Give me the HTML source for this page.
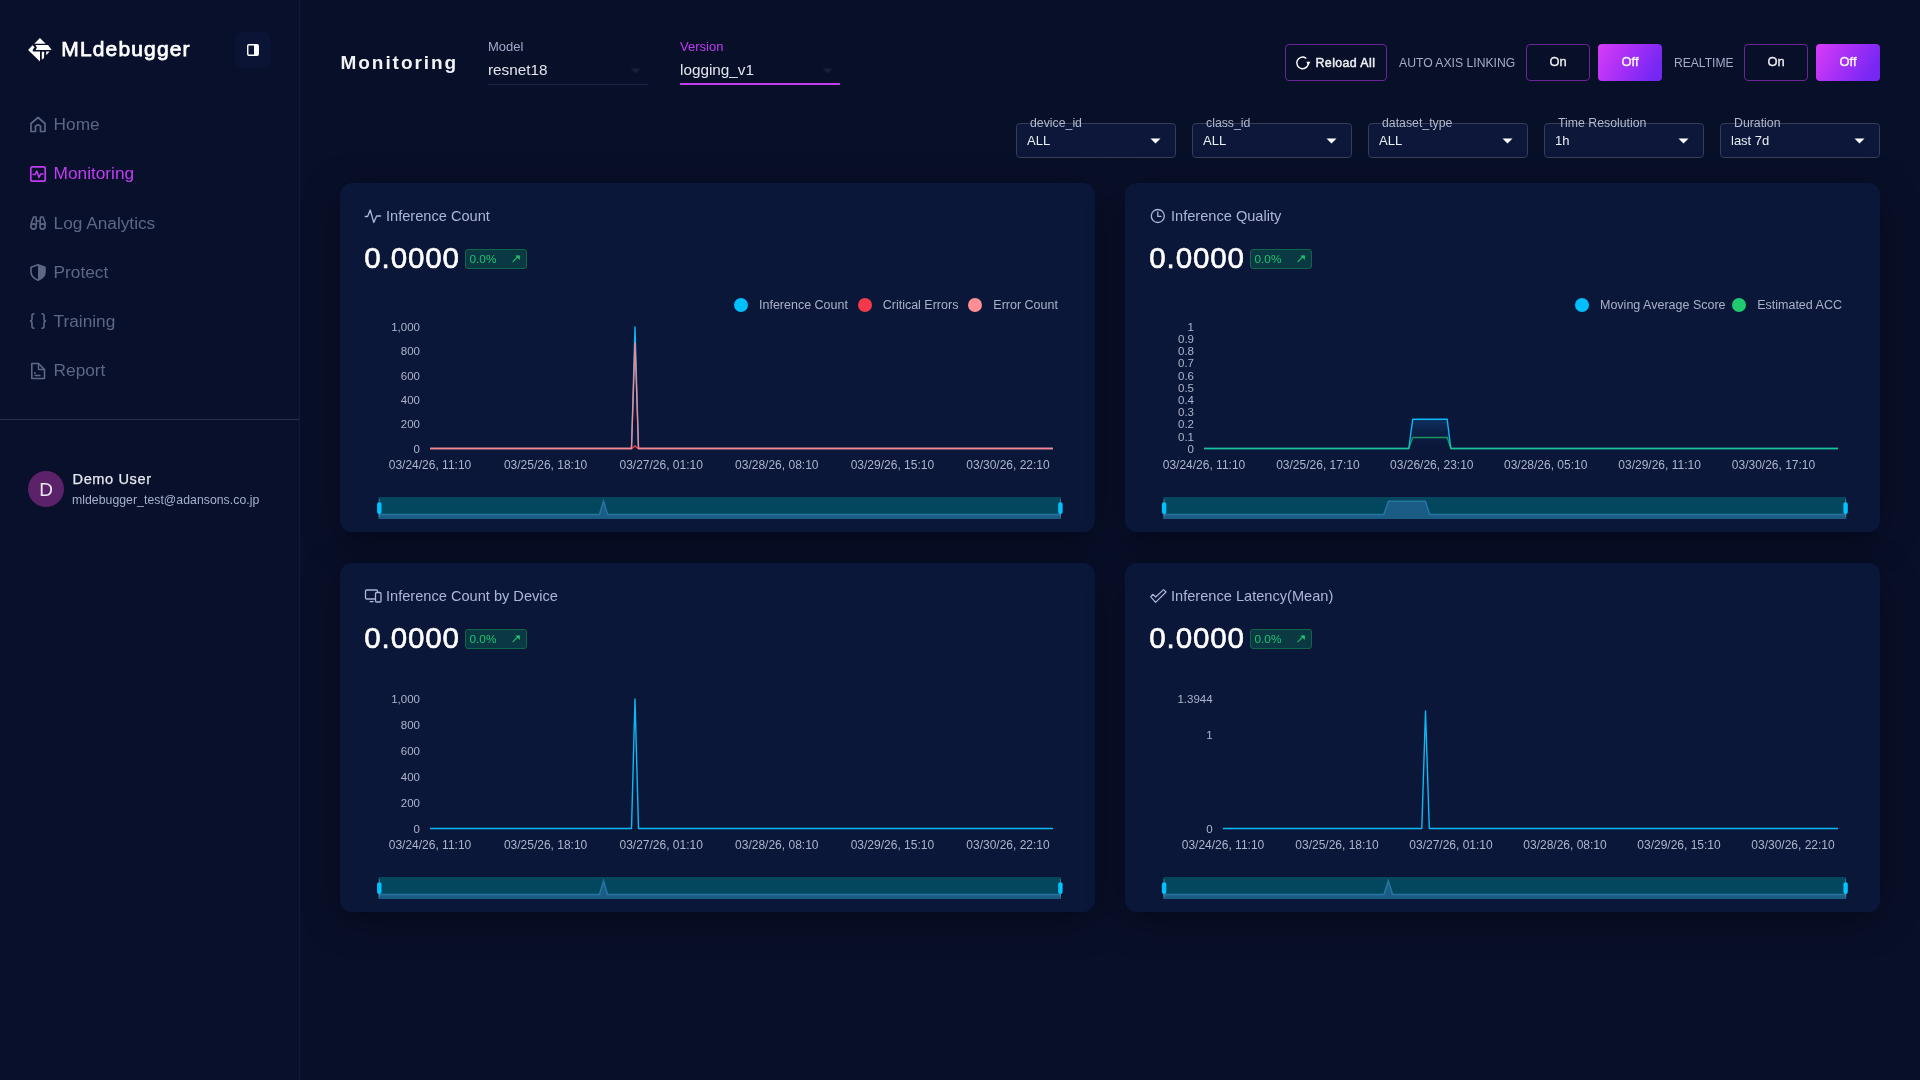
<!DOCTYPE html><html><head><meta charset="utf-8"><style>
html,body{margin:0;padding:0;}
body{width:1920px;height:1080px;overflow:hidden;background:#080f28;font-family:"Liberation Sans", sans-serif;position:relative;}
.t{position:absolute;white-space:nowrap;line-height:1;}
#w{position:absolute;left:0;top:0;width:1920px;height:1080px;will-change:transform;}
.b{position:absolute;box-sizing:border-box;}
svg{position:absolute;overflow:visible;}
</style></head><body><div id="w">
<div class="b" style="left:0px;top:0px;width:300px;height:1080px;background:#09102b;border-right:1px solid #0e1a40;"></div>
<svg style="left:0;top:0" width="300" height="80" viewBox="0 0 300 80">
<g fill="#ffffff">
<path d="M39.9 37.9 L45.7 43.8 L34.3 43.8 Z"/>
<path d="M35.4 45.1 L48.0 45.1 L51.7 50.1 L35.7 50.1 L36.9 47.4 Z"/>
<path d="M28.1 50.0 L32.45 45.35 L33.4 46.0 L34.6 47.3 L33.25 49.0 L32.6 50.5 L33.0 51.45 L40.0 51.45 L40.0 61.4 Z"/>
<path d="M41.8 51.8 L44.2 51.8 L44.0 57.8 Q43.6 59.2 41.8 59.4 Z"/>
<path d="M46.2 51.55 L49.6 51.55 L46.2 55.2 Z"/>
</g></svg>
<div class="t" style="left:61.30px;top:38.42px;font-size:21px;color:#ffffff;letter-spacing:1.15px;-webkit-text-stroke:0.75px #fff;">MLdebugger</div>
<div class="b" style="left:235px;top:32px;width:36px;height:36px;background:#0b1434;border-radius:8px;"></div>
<svg style="left:247px;top:44px" width="12" height="12" viewBox="0 0 12 12">
<rect x="0.75" y="0.75" width="10.5" height="10.5" rx="1.2" fill="none" stroke="#fff" stroke-width="1.4"/>
<rect x="7" y="0.75" width="4.25" height="10.5" fill="#fff"/>
</svg>
<div class="t" style="left:53.60px;top:116.00px;font-size:17.25px;color:#5d6786;">Home</div>
<div class="t" style="left:53.60px;top:165.00px;font-size:17.25px;color:#c23cf2;">Monitoring</div>
<div class="t" style="left:53.60px;top:214.60px;font-size:17.25px;color:#5d6786;">Log Analytics</div>
<div class="t" style="left:53.60px;top:264.10px;font-size:17.25px;color:#5d6786;">Protect</div>
<div class="t" style="left:53.60px;top:313.20px;font-size:17.25px;color:#5d6786;">Training</div>
<div class="t" style="left:53.60px;top:362.20px;font-size:17.25px;color:#5d6786;">Report</div>
<svg style="left:0;top:0" width="300" height="400" viewBox="0 0 300 400" fill="none" stroke-linecap="round" stroke-linejoin="round">
<path d="M31 131.5 V123.5 L38 117.5 L45 123.5 V131.5 H40.5 V126 Q38 123.5 35.5 126 V131.5 Z" stroke="#5d6786" stroke-width="1.7"/>
<rect x="30.8" y="166.8" width="14.4" height="14.4" rx="1.8" stroke="#c23cf2" stroke-width="1.7"/>
<path d="M33 174.5 H35.3 L36.8 171 L39 177.5 L40.6 174 H43" stroke="#c23cf2" stroke-width="1.5"/>
<path d="M31 224 L33.5 217 H36 L36.5 224 M40 224 L40.5 217 H43 L45.5 224" stroke="#5d6786" stroke-width="1.6"/>
<circle cx="33.5" cy="226.5" r="2.6" stroke="#5d6786" stroke-width="1.6"/>
<circle cx="42.5" cy="226.5" r="2.6" stroke="#5d6786" stroke-width="1.6"/>
<path d="M36.5 221 H40" stroke="#5d6786" stroke-width="1.6"/>
<path d="M38 264.8 L45 267.2 V272 Q45 277.5 38 280.2 Q31 277.5 31 272 V267.2 Z" stroke="#5d6786" stroke-width="1.6"/>
<path d="M38 264.8 L45 267.2 V272 Q45 277.5 38 280.2 Z" fill="#5d6786"/>
<path d="M34 313.8 Q32 313.8 32 315.5 V318.5 Q32 320.8 30.5 321 Q32 321.2 32 323.5 V326.5 Q32 328.2 34 328.2" stroke="#5d6786" stroke-width="1.6"/>
<path d="M42 313.8 Q44 313.8 44 315.5 V318.5 Q44 320.8 45.5 321 Q44 321.2 44 323.5 V326.5 Q44 328.2 42 328.2" stroke="#5d6786" stroke-width="1.6"/>
<path d="M31.8 363.5 H38.5 L44.5 369.5 V378.5 H31.8 Z" stroke="#5d6786" stroke-width="1.6"/>
<path d="M38.5 363.5 V369.5 H44.5" stroke="#5d6786" stroke-width="1.4"/>
<path d="M34.5 373 H35.5 M35 375.5 H40" stroke="#5d6786" stroke-width="1.4"/>
</svg>
<div class="b" style="left:0px;top:419px;width:299px;height:1px;background:#293247;"></div>
<div class="b" style="left:28px;top:471px;width:36px;height:36px;border-radius:50%;background:#5b2169;"></div>
<div class="t" style="left:46.00px;top:480.42px;font-size:19px;color:#e8e8f0;transform:translateX(-50%);">D</div>
<div class="t" style="left:72.50px;top:471.64px;font-size:14.6px;color:#e6e8ef;letter-spacing:0.6px;-webkit-text-stroke:0.25px #e6e8ef;">Demo User</div>
<div class="t" style="left:72.00px;top:493.63px;font-size:12.25px;color:#a7b0cc;letter-spacing:0.04px;">mldebugger_test@adansons.co.jp</div>
<div class="t" style="left:340.50px;top:53.12px;font-size:19px;color:#f2f3f7;font-weight:700;letter-spacing:1.95px;">Monitoring</div>
<div class="t" style="left:488.00px;top:39.70px;font-size:13px;color:#a2a9cc;">Model</div>
<div class="t" style="left:488.00px;top:61.85px;font-size:15.3px;color:#e4e6ee;">resnet18</div>
<div class="b" style="left:488px;top:84px;width:160px;height:1px;background:#1b2440;"></div>
<svg style="left:630px;top:68px" width="12" height="6"><path d="M0.5 0.5 L10.5 0.5 L5.5 5.5 Z" fill="#1a2035"/></svg>
<div class="t" style="left:680.00px;top:39.70px;font-size:13px;color:#c23cf2;">Version</div>
<div class="t" style="left:680.00px;top:61.85px;font-size:15.3px;color:#e4e6ee;">logging_v1</div>
<div class="b" style="left:680px;top:83px;width:160px;height:2px;background:#c23cf2;"></div>
<svg style="left:822px;top:68px" width="12" height="6"><path d="M0.5 0.5 L10.5 0.5 L5.5 5.5 Z" fill="#1a2035"/></svg>
<div class="b" style="left:1285px;top:44px;width:102px;height:37px;border:1px solid #6a2596;border-radius:4px;"></div>
<svg style="left:1294px;top:55px" width="18" height="16" viewBox="0 0 18 16" fill="none">
<path d="M14.35 7.4 A5.8 5.8 0 1 1 11.8 3.1" stroke="#fff" stroke-width="1.45" stroke-linecap="round"/>
<path d="M12.3 6.7 L16.4 6.7 L14.35 10.4 Z" fill="#fff"/>
</svg>
<div class="t" style="left:1315.50px;top:57.10px;font-size:12.4px;color:#f0f1f5;letter-spacing:0.4px;-webkit-text-stroke:0.45px #f0f1f5;">Reload All</div>
<div class="t" style="left:1399.00px;top:57.07px;font-size:12.2px;color:#a5acc6;">AUTO AXIS LINKING</div>
<div class="b" style="left:1526px;top:44px;width:64px;height:37px;border:1px solid #6a2596;border-radius:4px;"></div>
<div class="t" style="left:1558.00px;top:56.48px;font-size:12.9px;color:#f0f1f5;transform:translateX(-50%);-webkit-text-stroke:0.3px #f0f1f5;">On</div>
<div class="b" style="left:1744px;top:44px;width:64px;height:37px;border:1px solid #6a2596;border-radius:4px;"></div>
<div class="t" style="left:1776.00px;top:56.48px;font-size:12.9px;color:#f0f1f5;transform:translateX(-50%);-webkit-text-stroke:0.3px #f0f1f5;">On</div>
<div class="b" style="left:1598px;top:44px;width:64px;height:37px;border-radius:4px;background:linear-gradient(120deg,#d83df8 0%,#a52ff6 45%,#7727f4 85%);"></div>
<div class="t" style="left:1630.00px;top:56.48px;font-size:12.9px;color:#ffffff;transform:translateX(-50%);-webkit-text-stroke:0.3px #fff;">Off</div>
<div class="b" style="left:1816px;top:44px;width:64px;height:37px;border-radius:4px;background:linear-gradient(120deg,#d83df8 0%,#a52ff6 45%,#7727f4 85%);"></div>
<div class="t" style="left:1848.00px;top:56.48px;font-size:12.9px;color:#ffffff;transform:translateX(-50%);-webkit-text-stroke:0.3px #fff;">Off</div>
<div class="t" style="left:1674.00px;top:57.16px;font-size:12.1px;color:#a5acc6;">REALTIME</div>
<div class="b" style="left:1016px;top:123px;width:160px;height:35px;background:#0c1739;border:1px solid #363e55;border-radius:4px;"></div>
<div class="t" style="left:1030.00px;top:117.09px;font-size:12.3px;color:#b3b9cf;">device_id</div>
<div class="t" style="left:1027.00px;top:134.20px;font-size:13px;color:#eceef4;">ALL</div>
<svg style="left:1150px;top:138px" width="12" height="7"><path d="M0.5 0.5 L10.5 0.5 L5.5 5.5 Z" fill="#ffffff"/></svg>
<div class="b" style="left:1192px;top:123px;width:160px;height:35px;background:#0c1739;border:1px solid #363e55;border-radius:4px;"></div>
<div class="t" style="left:1206.00px;top:117.09px;font-size:12.3px;color:#b3b9cf;">class_id</div>
<div class="t" style="left:1203.00px;top:134.20px;font-size:13px;color:#eceef4;">ALL</div>
<svg style="left:1326px;top:138px" width="12" height="7"><path d="M0.5 0.5 L10.5 0.5 L5.5 5.5 Z" fill="#ffffff"/></svg>
<div class="b" style="left:1368px;top:123px;width:160px;height:35px;background:#0c1739;border:1px solid #363e55;border-radius:4px;"></div>
<div class="t" style="left:1382.00px;top:117.09px;font-size:12.3px;color:#b3b9cf;">dataset_type</div>
<div class="t" style="left:1379.00px;top:134.20px;font-size:13px;color:#eceef4;">ALL</div>
<svg style="left:1502px;top:138px" width="12" height="7"><path d="M0.5 0.5 L10.5 0.5 L5.5 5.5 Z" fill="#ffffff"/></svg>
<div class="b" style="left:1544px;top:123px;width:160px;height:35px;background:#0c1739;border:1px solid #363e55;border-radius:4px;"></div>
<div class="t" style="left:1558.00px;top:117.09px;font-size:12.3px;color:#b3b9cf;">Time Resolution</div>
<div class="t" style="left:1555.00px;top:134.20px;font-size:13px;color:#eceef4;">1h</div>
<svg style="left:1678px;top:138px" width="12" height="7"><path d="M0.5 0.5 L10.5 0.5 L5.5 5.5 Z" fill="#ffffff"/></svg>
<div class="b" style="left:1720px;top:123px;width:160px;height:35px;background:#0c1739;border:1px solid #363e55;border-radius:4px;"></div>
<div class="t" style="left:1734.00px;top:117.09px;font-size:12.3px;color:#b3b9cf;">Duration</div>
<div class="t" style="left:1731.00px;top:134.20px;font-size:13px;color:#eceef4;">last 7d</div>
<svg style="left:1854px;top:138px" width="12" height="7"><path d="M0.5 0.5 L10.5 0.5 L5.5 5.5 Z" fill="#ffffff"/></svg>
<div class="b" style="left:340px;top:183px;width:755px;height:349px;background:#0b1739;border-radius:12px;box-shadow:0 8px 36px rgba(0,0,0,0.34);"></div>
<div class="t" style="left:386.00px;top:208.84px;font-size:14.6px;color:#adb5d9;">Inference Count</div>
<div class="t" style="left:364.30px;top:242.84px;font-size:29.6px;color:#ffffff;letter-spacing:0.85px;-webkit-text-stroke:0.6px #fff;">0.0000</div>
<div class="b" style="left:465px;top:249px;width:62px;height:20px;background:#0a3944;border:1px solid #0f6648;border-radius:3px;"></div>
<div class="t" style="left:469.50px;top:253.71px;font-size:11.8px;color:#1fc270;">0.0%</div>
<svg style="left:511px;top:254px" width="10" height="10" viewBox="0 0 10 10" fill="none" stroke="#1fc270" stroke-width="1.1" stroke-linecap="round"><path d="M2 7.6 L7.6 2"/><path d="M4.3 1.4 L8.9 1.4 L8.9 6.0 Z" fill="#1fc270" stroke="none"/></svg>
<div class="b" style="left:1125px;top:183px;width:755px;height:349px;background:#0b1739;border-radius:12px;box-shadow:0 8px 36px rgba(0,0,0,0.34);"></div>
<div class="t" style="left:1171.00px;top:208.84px;font-size:14.6px;color:#adb5d9;">Inference Quality</div>
<div class="t" style="left:1149.30px;top:242.84px;font-size:29.6px;color:#ffffff;letter-spacing:0.85px;-webkit-text-stroke:0.6px #fff;">0.0000</div>
<div class="b" style="left:1250px;top:249px;width:62px;height:20px;background:#0a3944;border:1px solid #0f6648;border-radius:3px;"></div>
<div class="t" style="left:1254.50px;top:253.71px;font-size:11.8px;color:#1fc270;">0.0%</div>
<svg style="left:1296px;top:254px" width="10" height="10" viewBox="0 0 10 10" fill="none" stroke="#1fc270" stroke-width="1.1" stroke-linecap="round"><path d="M2 7.6 L7.6 2"/><path d="M4.3 1.4 L8.9 1.4 L8.9 6.0 Z" fill="#1fc270" stroke="none"/></svg>
<div class="b" style="left:340px;top:563px;width:755px;height:349px;background:#0b1739;border-radius:12px;box-shadow:0 8px 36px rgba(0,0,0,0.34);"></div>
<div class="t" style="left:386.00px;top:588.84px;font-size:14.6px;color:#adb5d9;">Inference Count by Device</div>
<div class="t" style="left:364.30px;top:622.84px;font-size:29.6px;color:#ffffff;letter-spacing:0.85px;-webkit-text-stroke:0.6px #fff;">0.0000</div>
<div class="b" style="left:465px;top:629px;width:62px;height:20px;background:#0a3944;border:1px solid #0f6648;border-radius:3px;"></div>
<div class="t" style="left:469.50px;top:633.71px;font-size:11.8px;color:#1fc270;">0.0%</div>
<svg style="left:511px;top:634px" width="10" height="10" viewBox="0 0 10 10" fill="none" stroke="#1fc270" stroke-width="1.1" stroke-linecap="round"><path d="M2 7.6 L7.6 2"/><path d="M4.3 1.4 L8.9 1.4 L8.9 6.0 Z" fill="#1fc270" stroke="none"/></svg>
<div class="b" style="left:1125px;top:563px;width:755px;height:349px;background:#0b1739;border-radius:12px;box-shadow:0 8px 36px rgba(0,0,0,0.34);"></div>
<div class="t" style="left:1171.00px;top:588.84px;font-size:14.6px;color:#adb5d9;">Inference Latency(Mean)</div>
<div class="t" style="left:1149.30px;top:622.84px;font-size:29.6px;color:#ffffff;letter-spacing:0.85px;-webkit-text-stroke:0.6px #fff;">0.0000</div>
<div class="b" style="left:1250px;top:629px;width:62px;height:20px;background:#0a3944;border:1px solid #0f6648;border-radius:3px;"></div>
<div class="t" style="left:1254.50px;top:633.71px;font-size:11.8px;color:#1fc270;">0.0%</div>
<svg style="left:1296px;top:634px" width="10" height="10" viewBox="0 0 10 10" fill="none" stroke="#1fc270" stroke-width="1.1" stroke-linecap="round"><path d="M2 7.6 L7.6 2"/><path d="M4.3 1.4 L8.9 1.4 L8.9 6.0 Z" fill="#1fc270" stroke="none"/></svg>
<svg style="left:0;top:0" width="1920" height="1080" viewBox="0 0 1920 1080" fill="none" stroke="#adb5d9" stroke-linecap="round" stroke-linejoin="round" stroke-width="1.3">
<path d="M365.2 216.5 H367.6 L370.2 210 L373.8 222.5 L376.6 216 H380.6"/>
<circle cx="1157.8" cy="216" r="6.5"/>
<path d="M1157.8 212 V216.4 H1161"/>
<rect x="365.5" y="590" width="12" height="9" rx="1.2"/>
<path d="M370.2 601.6 H373.2"/>
<circle cx="378.2" cy="594.6" r="0.5" fill="#adb5d9"/>
<rect x="375.5" y="592.5" width="5.5" height="9.5" rx="1.2" fill="#0b1739"/>
<path d="M1150.6 596.6 L1153 594.3 L1155.6 597 L1163.6 589.6 L1166 592 L1155.6 602.4 Z" stroke-width="1.2"/>
</svg>
<div class="b" style="left:734.3px;top:298px;width:14px;height:14px;border-radius:50%;background:#00bfff;"></div>
<div class="t" style="left:759.00px;top:298.92px;font-size:12.5px;color:#aab1c9;">Inference Count</div>
<div class="b" style="left:857.6px;top:298px;width:14px;height:14px;border-radius:50%;background:#f43a4a;"></div>
<div class="t" style="left:882.70px;top:298.92px;font-size:12.5px;color:#aab1c9;">Critical Errors</div>
<div class="b" style="left:968.4px;top:298px;width:14px;height:14px;border-radius:50%;background:#ff8f93;"></div>
<div class="t" style="left:993.30px;top:298.92px;font-size:12.5px;color:#aab1c9;">Error Count</div>
<div class="b" style="left:1575px;top:298px;width:14px;height:14px;border-radius:50%;background:#00bfff;"></div>
<div class="t" style="left:1600.00px;top:298.92px;font-size:12.5px;color:#aab1c9;">Moving Average Score</div>
<div class="b" style="left:1732.4px;top:298px;width:14px;height:14px;border-radius:50%;background:#1fca6e;"></div>
<div class="t" style="left:1757.20px;top:298.92px;font-size:12.5px;color:#aab1c9;">Estimated ACC</div>
<svg style="left:0;top:0" width="1920" height="1080" viewBox="0 0 1920 1080" font-family='"Liberation Sans", sans-serif'><text x="420" y="452.80" text-anchor="end" font-size="11.5" fill="#adb4cc">0</text><text x="420" y="428.42" text-anchor="end" font-size="11.5" fill="#adb4cc">200</text><text x="420" y="404.04" text-anchor="end" font-size="11.5" fill="#adb4cc">400</text><text x="420" y="379.66" text-anchor="end" font-size="11.5" fill="#adb4cc">600</text><text x="420" y="355.28" text-anchor="end" font-size="11.5" fill="#adb4cc">800</text><text x="420" y="330.90" text-anchor="end" font-size="11.5" fill="#adb4cc">1,000</text><text x="430.00" y="468.6" text-anchor="middle" font-size="12" fill="#adb4cc">03/24/26, 11:10</text><text x="545.60" y="468.6" text-anchor="middle" font-size="12" fill="#adb4cc">03/25/26, 18:10</text><text x="661.20" y="468.6" text-anchor="middle" font-size="12" fill="#adb4cc">03/27/26, 01:10</text><text x="776.80" y="468.6" text-anchor="middle" font-size="12" fill="#adb4cc">03/28/26, 08:10</text><text x="892.40" y="468.6" text-anchor="middle" font-size="12" fill="#adb4cc">03/29/26, 15:10</text><text x="1008.00" y="468.6" text-anchor="middle" font-size="12" fill="#adb4cc">03/30/26, 22:10</text><polyline points="430,448.5 631.5,448.5 635,327 638.5,448.5 1053,448.5" fill="none" stroke="#0cb8f5" stroke-width="1.4" stroke-linejoin="round"/><polyline points="430,448.5 632,448.5 635,446 638,448.5 1053,448.5" fill="none" stroke="#f43a4a" stroke-width="1.4"/><polyline points="430,448.5 631.5,448.5 635,343 638.5,448.5 1053,448.5" fill="none" stroke="#f7858c" stroke-width="1.35" stroke-linejoin="round"/><text x="1194" y="452.80" text-anchor="end" font-size="11.5" fill="#adb4cc">0</text><text x="1194" y="440.61" text-anchor="end" font-size="11.5" fill="#adb4cc">0.1</text><text x="1194" y="428.42" text-anchor="end" font-size="11.5" fill="#adb4cc">0.2</text><text x="1194" y="416.23" text-anchor="end" font-size="11.5" fill="#adb4cc">0.3</text><text x="1194" y="404.04" text-anchor="end" font-size="11.5" fill="#adb4cc">0.4</text><text x="1194" y="391.85" text-anchor="end" font-size="11.5" fill="#adb4cc">0.5</text><text x="1194" y="379.66" text-anchor="end" font-size="11.5" fill="#adb4cc">0.6</text><text x="1194" y="367.47" text-anchor="end" font-size="11.5" fill="#adb4cc">0.7</text><text x="1194" y="355.28" text-anchor="end" font-size="11.5" fill="#adb4cc">0.8</text><text x="1194" y="343.09" text-anchor="end" font-size="11.5" fill="#adb4cc">0.9</text><text x="1194" y="330.90" text-anchor="end" font-size="11.5" fill="#adb4cc">1</text><text x="1204.00" y="468.6" text-anchor="middle" font-size="12" fill="#adb4cc">03/24/26, 11:10</text><text x="1317.90" y="468.6" text-anchor="middle" font-size="12" fill="#adb4cc">03/25/26, 17:10</text><text x="1431.80" y="468.6" text-anchor="middle" font-size="12" fill="#adb4cc">03/26/26, 23:10</text><text x="1545.70" y="468.6" text-anchor="middle" font-size="12" fill="#adb4cc">03/28/26, 05:10</text><text x="1659.60" y="468.6" text-anchor="middle" font-size="12" fill="#adb4cc">03/29/26, 11:10</text><text x="1773.50" y="468.6" text-anchor="middle" font-size="12" fill="#adb4cc">03/30/26, 17:10</text><defs><linearGradient id="ga" x1="0" y1="0" x2="0" y2="1"><stop offset="0" stop-color="#0f3a6e" stop-opacity="0.75"/><stop offset="1" stop-color="#0b1739" stop-opacity="0.2"/></linearGradient></defs><polygon points="1408.8,448.5 1412.7,419.3 1447.2,419.3 1450.8,448.5" fill="url(#ga)"/><polyline points="1204,448.5 1408.8,448.5 1412.7,419.3 1447.2,419.3 1450.8,448.5 1838,448.5" fill="none" stroke="#0cb8f5" stroke-width="1.4" stroke-linejoin="round"/><polyline points="1204,448.5 1408.8,448.5 1412.7,437.5 1447.2,437.5 1450.8,448.5 1838,448.5" fill="none" stroke="#1fca6e" stroke-width="1.4" stroke-linejoin="round" stroke-opacity="0.7"/><text x="420" y="832.85" text-anchor="end" font-size="11.5" fill="#adb4cc">0</text><text x="420" y="806.82" text-anchor="end" font-size="11.5" fill="#adb4cc">200</text><text x="420" y="780.79" text-anchor="end" font-size="11.5" fill="#adb4cc">400</text><text x="420" y="754.76" text-anchor="end" font-size="11.5" fill="#adb4cc">600</text><text x="420" y="728.73" text-anchor="end" font-size="11.5" fill="#adb4cc">800</text><text x="420" y="702.70" text-anchor="end" font-size="11.5" fill="#adb4cc">1,000</text><text x="430.00" y="848.6" text-anchor="middle" font-size="12" fill="#adb4cc">03/24/26, 11:10</text><text x="545.60" y="848.6" text-anchor="middle" font-size="12" fill="#adb4cc">03/25/26, 18:10</text><text x="661.20" y="848.6" text-anchor="middle" font-size="12" fill="#adb4cc">03/27/26, 01:10</text><text x="776.80" y="848.6" text-anchor="middle" font-size="12" fill="#adb4cc">03/28/26, 08:10</text><text x="892.40" y="848.6" text-anchor="middle" font-size="12" fill="#adb4cc">03/29/26, 15:10</text><text x="1008.00" y="848.6" text-anchor="middle" font-size="12" fill="#adb4cc">03/30/26, 22:10</text><polyline points="430,828.5 631.5,828.5 635,699 638.5,828.5 1053,828.5" fill="none" stroke="#0cb8f5" stroke-width="1.4" stroke-linejoin="round"/><text x="1212.6" y="702.70" text-anchor="end" font-size="11.5" fill="#adb4cc">1.3944</text><text x="1212.6" y="739.00" text-anchor="end" font-size="11.5" fill="#adb4cc">1</text><text x="1212.6" y="832.85" text-anchor="end" font-size="11.5" fill="#adb4cc">0</text><text x="1223.00" y="848.6" text-anchor="middle" font-size="12" fill="#adb4cc">03/24/26, 11:10</text><text x="1337.00" y="848.6" text-anchor="middle" font-size="12" fill="#adb4cc">03/25/26, 18:10</text><text x="1451.00" y="848.6" text-anchor="middle" font-size="12" fill="#adb4cc">03/27/26, 01:10</text><text x="1565.00" y="848.6" text-anchor="middle" font-size="12" fill="#adb4cc">03/28/26, 08:10</text><text x="1679.00" y="848.6" text-anchor="middle" font-size="12" fill="#adb4cc">03/29/26, 15:10</text><text x="1793.00" y="848.6" text-anchor="middle" font-size="12" fill="#adb4cc">03/30/26, 22:10</text><polyline points="1223,828.5 1421.8,828.5 1425.5,711 1429.3,828.5 1838,828.5" fill="none" stroke="#0cb8f5" stroke-width="1.4" stroke-linejoin="round"/><rect x="378.5" y="497" width="682.5" height="22" fill="#03475f"/><polygon points="378.5,514.5 599.5,514.5 603.5,501.3 607.5,514.5 1061,514.5 1061,519 378.5,519" fill="#1a5c84"/><polyline points="378.5,514.5 599.5,514.5 603.5,501.3 607.5,514.5 1061,514.5" fill="none" stroke="#2674a0" stroke-width="1.6"/><line x1="379.3" y1="499" x2="379.3" y2="517" stroke="#5e8ea3" stroke-width="0.7"/><rect x="377.1" y="502.2" width="4.4" height="11.8" rx="2" fill="#00c3ff"/><line x1="1060.4" y1="499" x2="1060.4" y2="517" stroke="#5e8ea3" stroke-width="0.7"/><rect x="1058.2" y="502.2" width="4.4" height="11.8" rx="2" fill="#00c3ff"/><rect x="1163.3" y="497" width="682.9000000000001" height="22" fill="#03475f"/><polygon points="1163.3,514.5 1383.8,514.5 1388.5,501.3 1425.4,501.3 1429.6,514.5 1846.2,514.5 1846.2,519 1163.3,519" fill="#1a5c84"/><polyline points="1163.3,514.5 1383.8,514.5 1388.5,501.3 1425.4,501.3 1429.6,514.5 1846.2,514.5" fill="none" stroke="#2674a0" stroke-width="1.6"/><line x1="1164.1" y1="499" x2="1164.1" y2="517" stroke="#5e8ea3" stroke-width="0.7"/><rect x="1161.8999999999999" y="502.2" width="4.4" height="11.8" rx="2" fill="#00c3ff"/><line x1="1845.6000000000001" y1="499" x2="1845.6000000000001" y2="517" stroke="#5e8ea3" stroke-width="0.7"/><rect x="1843.4" y="502.2" width="4.4" height="11.8" rx="2" fill="#00c3ff"/><rect x="378.5" y="877" width="682.5" height="22" fill="#03475f"/><polygon points="378.5,894.5 599.5,894.5 603.5,881 607.5,894.5 1061,894.5 1061,899 378.5,899" fill="#1a5c84"/><polyline points="378.5,894.5 599.5,894.5 603.5,881 607.5,894.5 1061,894.5" fill="none" stroke="#2674a0" stroke-width="1.6"/><line x1="379.3" y1="879" x2="379.3" y2="897" stroke="#5e8ea3" stroke-width="0.7"/><rect x="377.1" y="882.2" width="4.4" height="11.8" rx="2" fill="#00c3ff"/><line x1="1060.4" y1="879" x2="1060.4" y2="897" stroke="#5e8ea3" stroke-width="0.7"/><rect x="1058.2" y="882.2" width="4.4" height="11.8" rx="2" fill="#00c3ff"/><rect x="1163.3" y="877" width="682.9000000000001" height="22" fill="#03475f"/><polygon points="1163.3,894.5 1384,894.5 1388.3,881 1392.6,894.5 1846.2,894.5 1846.2,899 1163.3,899" fill="#1a5c84"/><polyline points="1163.3,894.5 1384,894.5 1388.3,881 1392.6,894.5 1846.2,894.5" fill="none" stroke="#2674a0" stroke-width="1.6"/><line x1="1164.1" y1="879" x2="1164.1" y2="897" stroke="#5e8ea3" stroke-width="0.7"/><rect x="1161.8999999999999" y="882.2" width="4.4" height="11.8" rx="2" fill="#00c3ff"/><line x1="1845.6000000000001" y1="879" x2="1845.6000000000001" y2="897" stroke="#5e8ea3" stroke-width="0.7"/><rect x="1843.4" y="882.2" width="4.4" height="11.8" rx="2" fill="#00c3ff"/></svg>
</div></body></html>
